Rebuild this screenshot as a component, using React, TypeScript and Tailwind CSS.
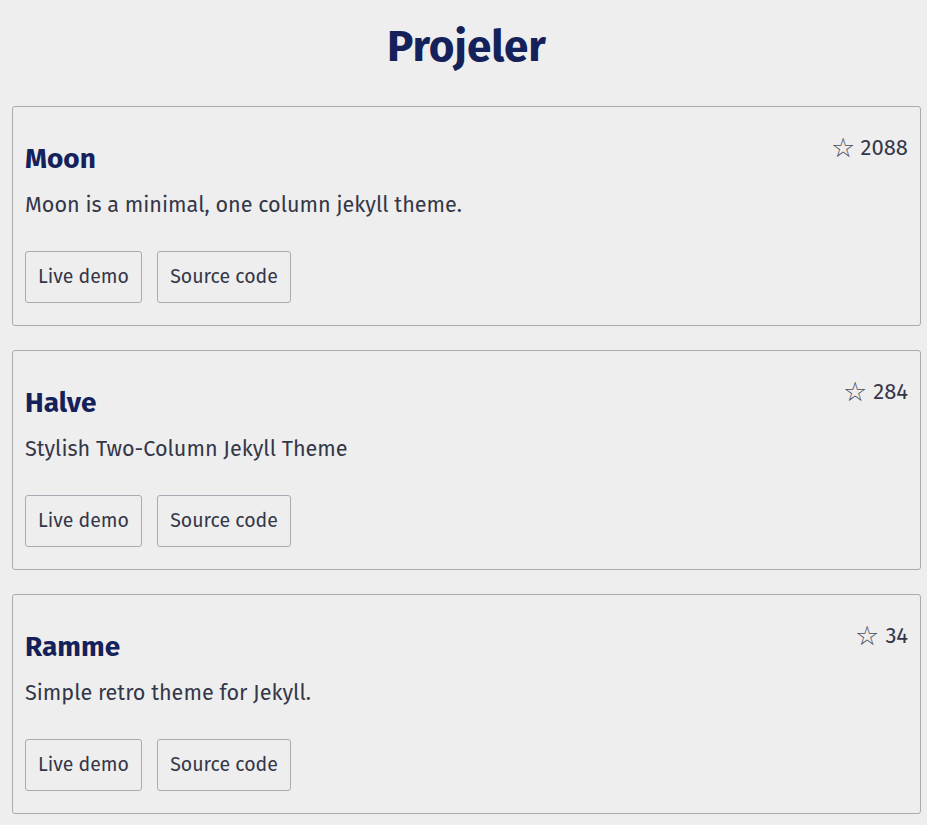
const projects = [
  { name: 'Moon', description: 'Moon is a minimal, one column jekyll theme.', stars: 2088 },
  { name: 'Halve', description: 'Stylish Two-Column Jekyll Theme', stars: 284 },
  { name: 'Ramme', description: 'Simple retro theme for Jekyll.', stars: 34 },
];

function ProjectCard({ name, description, stars }: { name: string; description: string; stars: number }) {
  return (
    <div className="border border-[#a9abb3] rounded-[3px] pt-[27px] pb-[22px] pl-[12px] pr-[12px]">
      <div className="flex justify-between items-start">
        <h2 className="mt-[7px] text-[28px] leading-[36px] font-bold text-[#14215a]">{name}</h2>
        <span className="flex items-center gap-[6px] text-[22px] leading-[28px] text-[#343748]">
          <span className="text-[27px] leading-[28px] text-[#4a4d5c]">☆</span>
          {stars}
        </span>
      </div>
      <p className="mt-[14px] text-[21.6px] leading-[28px] text-[#343748]">{description}</p>
      <div className="mt-[32px] flex gap-[15px]">
        <a className="w-[117px] h-[52px] flex items-center justify-center border border-[#a9abb3] rounded-[3px] text-[19.5px] text-[#343748]">
          Live demo
        </a>
        <a className="w-[134px] h-[52px] flex items-center justify-center border border-[#a9abb3] rounded-[3px] text-[19.5px] text-[#343748]">
          Source code
        </a>
      </div>
    </div>
  );
}

export default function App() {
  return (
    <div className="min-h-[825px] bg-[#eeeeee] pl-[12px] pr-[6px] pt-[20px] pb-[12px] font-['Fira_Sans','Noto_Sans',sans-serif]">
      <h1 className="text-center text-[44px] leading-[54px] font-bold text-[#14215a]">Projeler</h1>
      <div className="mt-[32px] flex flex-col gap-[24px]">
        {projects.map((p) => (
          <ProjectCard key={p.name} {...p} />
        ))}
      </div>
    </div>
  );
}
